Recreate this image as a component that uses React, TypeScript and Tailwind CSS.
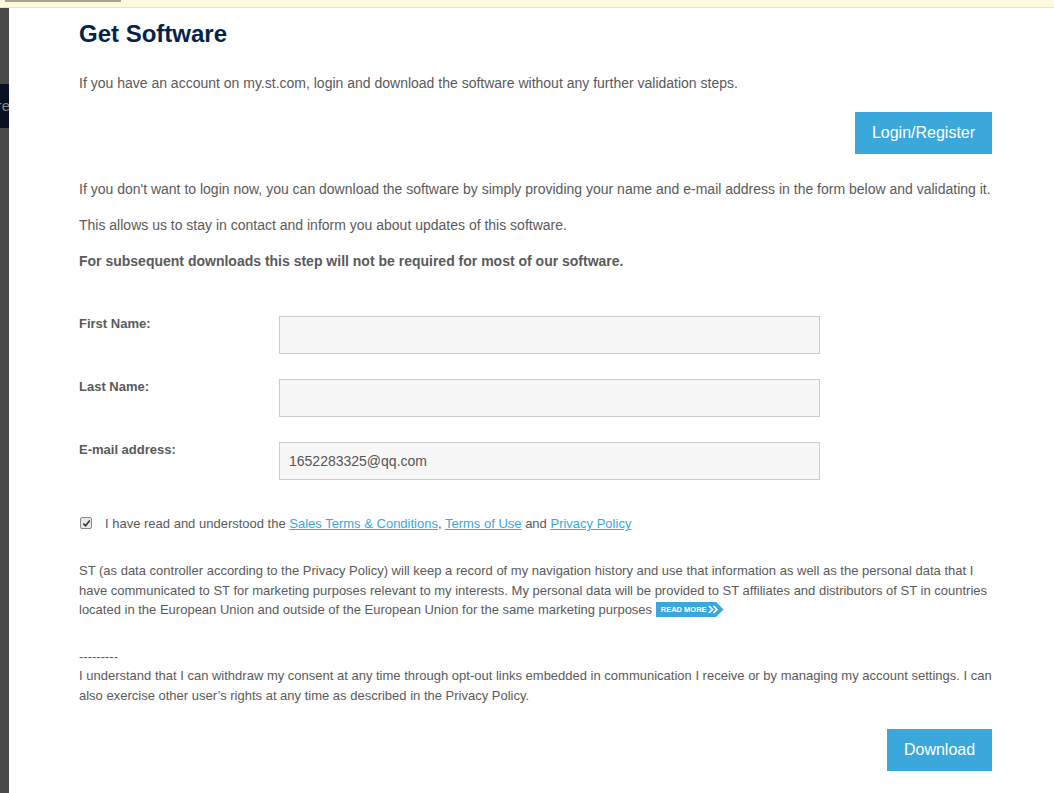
export default function App() {
  const font = { fontFamily: '"Liberation Sans", Arial, sans-serif' };
  return (
    <div className="w-[1054px] h-[793px] overflow-hidden bg-white text-[#5a5a5a] flex flex-col" style={font}>
      {/* top notice bar */}
      <div className="h-[8px] shrink-0 bg-[#fef8dd] border-b border-[#f2e3b0] flex items-start">
        <div className="ml-[5px] w-[116px] h-[2px] bg-[#a9a28e]" />
      </div>

      <div className="flex flex-1 min-h-0">
        {/* left overlay strip */}
        <div className="w-[9px] shrink-0 bg-[#4b4b4b] flex flex-col">
          <div className="h-[76px]" />
          <div className="h-[44px] bg-[#0a1222] flex items-center justify-end overflow-hidden">
            <span className="text-[15px] text-[#888] whitespace-nowrap -mr-[1px]">re</span>
          </div>
        </div>

        {/* dialog content */}
        <div className="flex-1 pl-[70px] pr-[62px] pt-[11px]">
          <h1 className="text-[24px] leading-[29px] font-bold text-[#03234b]">Get Software</h1>

          <p className="mt-[25px] text-[14px] leading-[20px]">
            If you have an account on my.st.com, login and download the software without any further validation steps.
          </p>

          <div className="flex justify-end mt-[19px]">
            <button className="w-[137px] h-[42px] bg-[#3aa8db] text-white text-[16px]">Login/Register</button>
          </div>

          <p className="mt-[25px] text-[14px] leading-[20px]">
            If you don't want to login now, you can download the software by simply providing your name and e-mail address in the form below and validating it.
          </p>
          <p className="mt-[16px] text-[14px] leading-[20px]">
            This allows us to stay in contact and inform you about updates of this software.
          </p>
          <p className="mt-[16px] text-[14px] leading-[20px] font-bold">
            For subsequent downloads this step will not be required for most of our software.
          </p>

          <div className="mt-[45px] flex flex-col gap-[25px]">
            {[
              { label: 'First Name:', value: '' },
              { label: 'Last Name:', value: '' },
              { label: 'E-mail address:', value: '1652283325@qq.com' },
            ].map((f) => (
              <div key={f.label} className="flex items-start">
                <label className="w-[200px] shrink-0 text-[13px] leading-[16px] font-bold">{f.label}</label>
                <div className="w-[541px] h-[38px] bg-[#f7f7f7] border border-[#cccccc] flex items-center px-[9px] text-[14px] text-[#555]">
                  {f.value}
                </div>
              </div>
            ))}
          </div>

          <div className="mt-[35px] flex items-center text-[13px] leading-[16px]">
            <span className="w-[12px] h-[12px] ml-[1px] border border-[#8a8a8a] bg-[#e9e9e9] rounded-[2px] flex items-center justify-center">
              <svg width="9" height="9" viewBox="0 0 10 10">
                <path d="M1.5 5.2 L4 7.6 L8.6 1.8" fill="none" stroke="#333" strokeWidth="1.8" />
              </svg>
            </span>
            <span className="ml-[13px] relative top-[1px]">
              I have read and understood the{' '}
              <a className="text-[#3aa8db] underline">Sales Terms &amp; Conditions</a>,{' '}
              <a className="text-[#3aa8db] underline">Terms of Use</a> and{' '}
              <a className="text-[#3aa8db] underline">Privacy Policy</a>
            </span>
          </div>

          <p className="mt-[30px] text-[13px] leading-[19.5px]">
            ST (as data controller according to the Privacy Policy) will keep a record of my navigation history and use that information as well as the personal data that I have communicated to ST for marketing purposes relevant to my interests. My personal data will be provided to ST affiliates and distributors of ST in countries located in the European Union and outside of the European Union for the same marketing purposes{' '}
            <span className="inline-flex align-middle items-center h-[15px] pl-[5px] pr-[4px] bg-[#3aa8db] text-white text-[7.5px] font-bold leading-none relative -top-[1px]" style={{ clipPath: 'polygon(0 0, 89% 0, 100% 50%, 89% 100%, 0 100%)' }}>
              READ MORE
              <svg width="12" height="9" viewBox="0 0 12 9" className="ml-[1px]">
                <path d="M1 1 L4.5 4.5 L1 8 M5.5 1 L9 4.5 L5.5 8" fill="none" stroke="white" strokeWidth="1.6" />
              </svg>
            </span>
          </p>

          <p className="mt-[27px] text-[13px] leading-[19.5px]">
            ---------
            <br />
            I understand that I can withdraw my consent at any time through opt-out links embedded in communication I receive or by managing my account settings. I can also exercise other user’s rights at any time as described in the Privacy Policy.
          </p>

          <div className="flex justify-end mt-[24px]">
            <button className="w-[105px] h-[42px] bg-[#3aa8db] text-white text-[16px]">Download</button>
          </div>
        </div>
      </div>
    </div>
  );
}
